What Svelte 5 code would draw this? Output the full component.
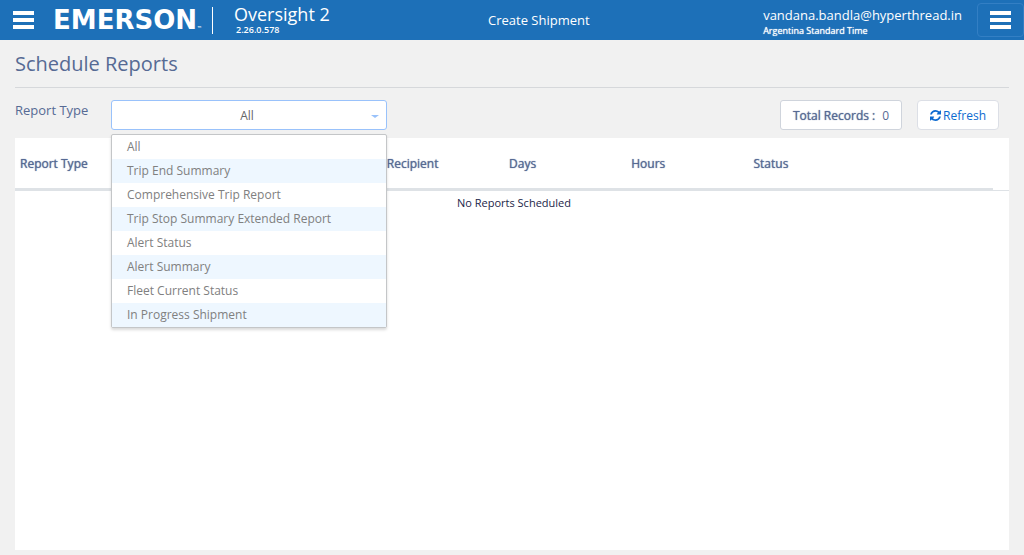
<script>
  const reportTypes = [
    'All',
    'Trip End Summary',
    'Comprehensive Trip Report',
    'Trip Stop Summary Extended Report',
    'Alert Status',
    'Alert Summary',
    'Fleet Current Status',
    'In Progress Shipment'
  ];
  const columns = ['Report Type', '', '', 'Recipient', 'Days', 'Hours', 'Status', ''];

  let selected = $state('All');
  let open = $state(true);

  function choose(type) {
    selected = type;
    open = false;
  }

  function toggleMenu(event) {
    event.preventDefault();
    open = !open;
  }
</script>

<div class="page">
  <header>
    <button class="menu-button" aria-label="Main menu">
      <span class="bars"><i></i><i></i><i></i></span>
    </button>
    <div class="logo">EMERSON<small>™</small></div>
    <div class="product">
      <span class="product-name">Oversight 2</span>
      <span class="version">2.26.0.578</span>
    </div>
    <a class="create" href="#create">Create Shipment</a>
    <div class="account">
      <span class="email">vandana.bandla@hyperthread.in</span>
      <span class="zone">Argentina Standard Time</span>
    </div>
    <button class="menu-button framed" aria-label="Account menu">
      <span class="bars"><i></i><i></i><i></i></span>
    </button>
  </header>

  <main>
    <h1>Schedule Reports</h1>

    <div class="toolbar">
      <label for="report-type">Report Type</label>
      <div class="picker">
        <select id="report-type" bind:value={selected} onmousedown={toggleMenu}>
          {#each reportTypes as type}
            <option value={type}>{type}</option>
          {/each}
        </select>
        {#if open}
          <ul class="menu">
            {#each reportTypes as type}
              <li><button onclick={() => choose(type)}>{type}</button></li>
            {/each}
          </ul>
        {/if}
      </div>
      <div class="box total"><b>Total Records :</b><span>0</span></div>
      <button class="box refresh">
        <svg viewBox="0 0 1536 1536" width="11" height="11" aria-hidden="true">
          <path fill="currentColor" d="M1511 928q0 5-1 7-64 268-268 434.500T764 1536q-146 0-282.500-55T238 1324l-129 129q-19 19-45 19t-45-19-19-45V960q0-26 19-45t45-19h448q26 0 45 19t19 45-19 45l-137 137q71 66 161 102t187 36q134 0 250-65t186-179q11-17 53-117 8-23 30-23h192q13 0 22.500 9.500t9.500 22.500zm25-800v448q0 26-19 45t-45 19h-448q-26 0-45-19t-19-45 19-45l138-138Q969 256 768 256q-134 0-250 65T332 500q-11 17-53 117-8 23-30 23H50q-13 0-22.500-9.500T18 608v-7q65-268 270-434.500T768 0q146 0 284 55.500T1297 212l130-129q19-19 45-19t45 19 19 45z" />
        </svg>
        Refresh
      </button>
    </div>

    <section class="panel">
      <div class="head">
        <table>
          <thead>
            <tr>
              {#each columns as column}
                <th scope="col">{column}</th>
              {/each}
            </tr>
          </thead>
        </table>
      </div>
      <p>No Reports Scheduled</p>
    </section>
  </main>
</div>

<style>
  :global(body) {
    margin: 0;
    background: #f1f1f1;
    font-family: 'Open Sans', sans-serif;
  }
  .page {
    display: flex;
    flex-direction: column;
    min-height: 100vh;
    box-sizing: border-box;
    padding-bottom: 5px;
    color: #566a94;
    font-size: 13px;
  }
  button,
  select {
    font: inherit;
    cursor: pointer;
  }
  header {
    display: flex;
    align-items: center;
    height: 40px;
    background: #1d70b8;
    color: #fff;
  }
  .menu-button {
    display: flex;
    justify-content: center;
    align-items: center;
    width: 47px;
    height: 34px;
    padding: 0;
    border: 1px solid transparent;
    border-radius: 4px;
    background: none;
  }
  .framed {
    border-color: #337fc4;
  }
  .bars {
    display: grid;
    gap: 3px;
    width: 21px;
  }
  .bars i {
    height: 4px;
    background: #fff;
  }
  .logo {
    display: flex;
    align-items: flex-end;
    box-sizing: border-box;
    width: 166px;
    height: 27px;
    padding-left: 6px;
    border-right: 1px solid #fff;
    font: bold 26px/28px 'DejaVu Sans', sans-serif;
  }
  .logo small {
    font-size: 5px;
    line-height: 12px;
  }
  .product {
    display: flex;
    flex-direction: column;
    width: 254px;
    padding-left: 21px;
  }
  .product-name {
    font-size: 18px;
    line-height: 20px;
  }
  .version {
    padding-left: 2px;
    font-size: 9px;
    font-weight: 600;
    line-height: 12px;
  }
  .create {
    color: inherit;
    text-decoration: none;
  }
  .account {
    display: flex;
    flex-direction: column;
    margin: 0 15px 0 auto;
    padding-top: 4px;
  }
  .email {
    line-height: 18px;
  }
  .zone {
    font-size: 9px;
    line-height: 14px;
    text-shadow: 0 0 1px currentColor;
  }
  main {
    flex: 1;
    display: flex;
    flex-direction: column;
    padding: 0 15px;
  }
  h1 {
    margin: 0;
    padding: 10px 0 9px;
    border-bottom: 1px solid #d6d8db;
    font-size: 20px;
    font-weight: 400;
    line-height: 28px;
  }
  .toolbar {
    display: flex;
    align-items: flex-start;
    padding: 12px 10px 8px 0;
  }
  label {
    width: 96px;
    line-height: 20px;
  }
  .picker {
    position: relative;
    width: 276px;
    margin-right: auto;
  }
  select {
    display: block;
    appearance: none;
    width: 100%;
    height: 30px;
    padding: 0 4px 0 0;
    border: 1px solid #99c2fb;
    border-radius: 3px;
    outline: none;
    color: #666;
    background: #fff;
    font-size: 12px;
    text-align: center;
    text-align-last: center;
  }
  .picker::after {
    content: '';
    position: absolute;
    top: 15px;
    right: 8px;
    border: 4px solid transparent;
    border-top: 3px solid #99c2fb;
    border-bottom: 0;
    pointer-events: none;
  }
  .menu {
    position: absolute;
    z-index: 1;
    top: 34px;
    left: 0;
    right: 0;
    margin: 0;
    padding: 0;
    border: 1px solid #c4c6c8;
    border-radius: 2px;
    background: #fff;
    box-shadow: 0 2px 3px rgba(0, 0, 0, 0.15);
    list-style: none;
  }
  .menu button {
    display: block;
    width: 100%;
    height: 24px;
    padding: 0 15px;
    border: 0;
    background: none;
    color: #808080;
    font-size: 12px;
    line-height: 24px;
    text-align: left;
  }
  .menu li:nth-child(even) {
    background: #eef7ff;
  }
  .box {
    display: flex;
    align-items: center;
    box-sizing: border-box;
    height: 30px;
    padding: 0 12px;
    border: 1px solid #cfd4dc;
    border-radius: 3px;
    background: #fff;
    font-size: 12px;
  }
  .total {
    gap: 7px;
    margin-right: 15px;
  }
  b,
  th {
    font-weight: 400;
    text-shadow: 0 0 1px currentColor;
  }
  .refresh {
    gap: 2px;
    border-color: #dcdfe6;
    border-radius: 4px;
    color: #0d6ad0;
  }
  .panel {
    flex: 1;
    background: #fff;
  }
  .head {
    padding-right: 16px;
    border-bottom: 1px solid #dee2e6;
  }
  table {
    width: 100%;
    border-collapse: separate;
    border-spacing: 0;
    table-layout: fixed;
  }
  th {
    height: 52px;
    box-sizing: border-box;
    padding: 0 5px;
    border-bottom: 2px solid #dee2e6;
    font-size: 12px;
    text-align: left;
  }
  p {
    margin: 0;
    padding: 4px 0 0 4px;
    color: #1c2549;
    font-size: 11px;
    line-height: 16px;
    text-align: center;
  }
</style>
